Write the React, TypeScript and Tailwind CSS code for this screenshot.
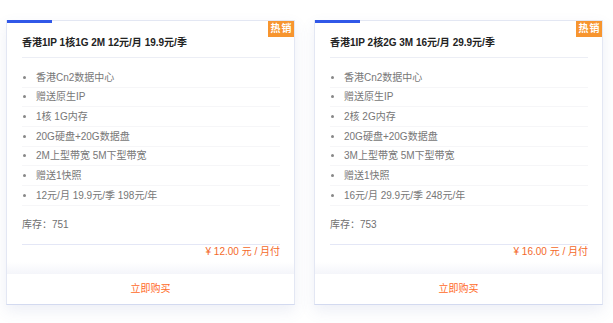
import React from 'react';

interface Plan {
  title: string;
  features: string[];
  stock: number;
  price: string;
}

const plans: Plan[] = [
  {
    title: '香港1IP 1核1G 2M 12元/月 19.9元/季',
    features: [
      '香港Cn2数据中心',
      '赠送原生IP',
      '1核 1G内存',
      '20G硬盘+20G数据盘',
      '2M上型带宽 5M下型带宽',
      '赠送1快照',
      '12元/月 19.9元/季 198元/年',
    ],
    stock: 751,
    price: '12.00',
  },
  {
    title: '香港1IP 2核2G 3M 16元/月 29.9元/季',
    features: [
      '香港Cn2数据中心',
      '赠送原生IP',
      '2核 2G内存',
      '20G硬盘+20G数据盘',
      '3M上型带宽 5M下型带宽',
      '赠送1快照',
      '16元/月 29.9元/季 248元/年',
    ],
    stock: 753,
    price: '16.00',
  },
];

function PlanCard({ plan }: { plan: Plan }) {
  return (
    <div className="relative w-[289px] bg-white border border-[#e3e7f3] border-b-[#d3daf0] shadow-[0_6px_14px_rgba(80,100,170,0.10)]">
      {/* blue accent on the top edge */}
      <div className="absolute -top-px left-0 w-[45px] h-[3px] bg-[#3158e8]" />
      <div className="absolute top-0 right-0 w-[26px] h-[16px] bg-[#f7952f] text-white text-[10px] font-bold leading-[16px] text-center tracking-[1px] pl-[1px]">
        热销
      </div>

      <div className="px-[15px] pr-[14px]">
        <div className="pt-[12px] pb-[4px] border-b border-[#eceef5] text-[10px] leading-[20px] font-bold text-[#222]">
          {plan.title}
        </div>

        <ul className="mt-[10px]">
          {plan.features.map(f => (
            <li
              key={f}
              className="flex items-center h-[19.67px] border-b border-[#f6f6f8] text-[10px] text-[#777]"
            >
              <span className="ml-[1px] w-[3px] h-[3px] rounded-full bg-[#888]" />
              <span className="ml-[10px]">{f}</span>
            </li>
          ))}
        </ul>

        <div className="pt-[9px] pb-[9px] leading-[20px] border-b border-[#e4e7f6] text-[10px] text-[#707070]">
          库存：{plan.stock}
        </div>

        <div className="text-right leading-[14px] text-[10px] text-[#f4692a]">
          ¥ {plan.price} 元 / 月付
        </div>
      </div>

      <div className="mt-[3px] h-[12px] bg-linear-to-b from-white to-[#f4f5fa]" />
      <div className="h-[30px] flex items-center justify-center text-[10px] text-[#ff6a1f]">
        立即购买
      </div>
    </div>
  );
}

export default function App() {
  return (
    <div
      className="w-[613px] h-[323px] bg-white pt-[20px] pl-[6px] flex gap-[19px] items-start"
      style={{ fontFamily: '"Liberation Sans", "Noto Sans CJK SC", sans-serif' }}
    >
      {plans.map(p => (
        <PlanCard key={p.title} plan={p} />
      ))}
    </div>
  );
}
